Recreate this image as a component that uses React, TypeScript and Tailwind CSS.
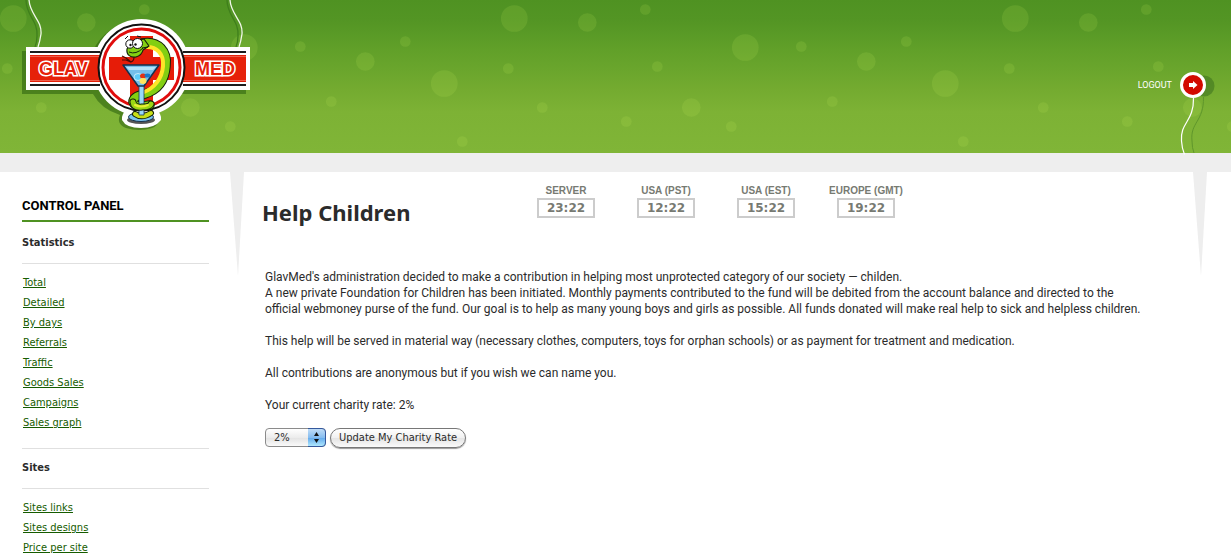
const BUBBLES = [
  [300, 46, 5], [365, 61, 9], [405, 41, 5], [331, 101, 5], [444, 83, 13], [462, 141, 5],
  [13, 18, 13], [7, 68, 5], [41, 107, 5], [86, 22, 9], [144, 9, 5], [125, 121, 5],
  [156, 66, 5], [190, 107, 9], [230, 126, 5], [244, 47, 13],
];

const CLOCKS = [
  { zone: "SERVER", time: "23:22" },
  { zone: "USA (PST)", time: "12:22" },
  { zone: "USA (EST)", time: "15:22" },
  { zone: "EUROPE (GMT)", time: "19:22" },
];

const MENU = [
  {
    title: "Statistics",
    links: ["Total", "Detailed", "By days", "Referrals", "Traffic", "Goods Sales", "Campaigns", "Sales graph"],
  },
  { title: "Sites", links: ["Sites links", "Sites designs", "Price per site"] },
];

function Bubbles() {
  return (
    <svg className="absolute inset-0 h-full w-full" aria-hidden="true">
      <defs>
        <pattern id="bubbles" width="501" height="153" patternUnits="userSpaceOnUse">
          {BUBBLES.map(([x, y, r]) => (
            <circle key={`${x}-${y}`} cx={x + 0.3} cy={y + 0.5} r={r + 0.3} fill="#c8f060" fillOpacity="0.13" />
          ))}
        </pattern>
      </defs>
      <rect width="100%" height="100%" fill="url(#bubbles)" />
    </svg>
  );
}

function Logo() {
  return (
    <svg width="232" height="132" viewBox="20 0 232 132" role="img" aria-label="GlavMed">
      {/* strings */}
      <g fill="none">
        <path d="M26 0C26 16 38 20 37 36Q37 42 35 47M227 0C227 16 239 20 238 36Q238 42 236 47" stroke="#3f7f1c" strokeWidth="1.3" />
        <path d="M29 0C30 15 42 20 41 34Q40 41 38 47M230 0C231 15 243 20 242 34Q241 41 239 47" stroke="#f2f8ea" strokeWidth="1.3" />
      </g>
      {/* drop shadow */}
      <path
        d="M22 51H93A48.5 48.5 0 0 1 182 51H246V94H178Q170 107 158 113Q162 124 152 128Q139 132 126 128Q116 124 120 115Q101 109 93 94H22Z"
        fill="#2f6410"
        fillOpacity="0.6"
      />
      {/* white plate */}
      <g fill="#fff">
        <path d="M26 47H250V90H26Z" />
        <circle cx="141.5" cy="67.5" r="48.5" />
        <path d="M128 108H155Q162 114 161 120Q155 128 141 128Q126 128 122 120Q121 114 128 108Z" />
      </g>
      {/* ribbon */}
      <path d="M30 52H100M183 52H246M30 85H100M183 85H246" stroke="#1c1c1c" strokeWidth="2" />
      <path d="M30 55H101V82H30ZM182 55H246V82H182Z" fill="#e62109" />
      <path d="M30 56.5H101M182 56.5H246M30 80.5H101M182 80.5H246" stroke="#f58b7c" strokeWidth="0.6" />
      <g
        fill="#e62109"
        stroke="#fff"
        strokeWidth="3"
        paintOrder="stroke"
        strokeLinejoin="miter"
        fontFamily="'Liberation Sans', Arial, sans-serif"
        fontWeight="900"
        fontSize="18"
      >
        <text x="39" y="75">GLAV</text>
        <text x="195" y="75">MED</text>
      </g>
      {/* medallion */}
      <circle cx="141.5" cy="67.5" r="43" fill="#fff" stroke="#111" strokeWidth="2" />
      <circle cx="141.5" cy="67.5" r="38.5" fill="#fff" stroke="#e00d0d" strokeWidth="3" />
      <path d="M130 36H153V57H174V80H153V101H130V80H109V57H130Z" fill="#e61c08" />
      {/* glass base */}
      <ellipse cx="141" cy="120" rx="14" ry="4" fill="#555" />
      <ellipse cx="141" cy="117" rx="12.5" ry="4.5" fill="#7cc5f0" stroke="#15304a" />
      {/* snake body */}
      <g fill="none" strokeLinecap="round">
        <path d="M142 43C159 40 168 52 166 66C165 80 158 90 145 94Q133 96 133 102Q135 108 150 105" stroke="#14220a" strokeWidth="9.5" />
        <path d="M142 43C159 40 168 52 166 66C165 80 158 90 145 94Q133 96 133 102Q135 108 150 105" stroke="#83cf12" strokeWidth="7.5" />
        <path d="M145 47C157 46 164 54 163 66C162 79 154 88 144 92" stroke="#ffe528" strokeWidth="4" />
        <path d="M135 114Q142 119 151 113" stroke="#14220a" strokeWidth="6" />
        <path d="M135 114Q142 119 151 113" stroke="#c8df18" strokeWidth="4" />
      </g>
      {/* glass */}
      <path d="M139 84H144V115H139Z" fill="#98d8fa" stroke="#173a5c" strokeWidth="0.8" />
      <path d="M123 65H159L144 86H138Z" fill="#74bfea" stroke="#12314e" strokeWidth="1.5" strokeLinejoin="round" />
      <path d="M126 67H156L153 70H129Z" fill="#b5e4fb" />
      <ellipse cx="138" cy="77" rx="4" ry="3.5" fill="#5ecbf8" stroke="#fff" strokeWidth="0.6" />
      <ellipse cx="143" cy="76" rx="3" ry="2.5" fill="#e33210" />
      <ellipse cx="147.5" cy="75.5" rx="3" ry="2" fill="#1779c9" />
      <ellipse cx="143" cy="81" rx="3.5" ry="3" fill="#ffe45c" />
      {/* coil crossing the stem */}
      <g fill="none" strokeLinecap="round">
        <path d="M133 102Q134 108 142 107Q150 107 151 104" stroke="#14220a" strokeWidth="7" />
        <path d="M133 102Q134 108 142 107Q150 107 151 104" stroke="#9bd714" strokeWidth="5" />
        <path d="M135 105Q141 108 148 105" stroke="#e9ee35" strokeWidth="2" />
      </g>
      {/* head */}
      <path d="M127 49C126 55 131 58 136 57Q142 55 143 50L149 46L144 39L131 42Z" fill="#83cf12" stroke="#14220a" strokeWidth="1.2" strokeLinejoin="round" />
      <path d="M129 52Q136 55 143 48M142 48L148 47" fill="none" stroke="#14220a" />
      <circle cx="130" cy="44" r="4.2" fill="#fff" stroke="#111" />
      <circle cx="137.5" cy="43.5" r="5" fill="#fff" stroke="#111" />
      <circle cx="130.5" cy="45" r="1.2" fill="#111" />
      <circle cx="135.5" cy="44.5" r="1.2" fill="#111" />
      <path d="M125 39L128 36M137 36L141 37" stroke="#111" fill="none" />
      <path d="M134 57Q134 61 131 62L126 60L122 60M131 62L126 58L122 56" fill="none" stroke="#4a0a06" strokeWidth="1.2" />
    </svg>
  );
}

function Spike() {
  return (
    <svg className="shrink-0" width="14" height="104" viewBox="0 0 14 104" aria-hidden="true">
      <path d="M0 0H14L8 104Z" fill="#eee" />
    </svg>
  );
}

function Header() {
  return (
    <header className="relative flex h-[153px] justify-between bg-[linear-gradient(#4f9222_0,#539524_20px,#61a029_50px,#74ab30_90px,#7db235_112px,#80b537_153px)] pl-5">
      <Bubbles />
      <a href="#home" className="relative">
        <Logo />
      </a>
      <a href="#logout" className="relative mr-4 flex pt-[71px] font-['Roboto'] text-[9px] leading-7 text-white">
        LOGOUT
        <svg className="ml-[7px]" width="36" height="84" viewBox="1179 71 36 84" aria-hidden="true">
          <circle cx="1204" cy="86" r="10.5" fill="#3f7420" fillOpacity="0.6" />
          <path d="M1203.5 97C1204 122 1190 122 1192 141Q1192 148 1194 153" fill="none" stroke="#5f962b" />
          <path d="M1193.5 98C1194 122 1180 122 1181.5 141Q1182 149 1184.5 154.5" fill="none" stroke="#fff" strokeWidth="1.2" />
          <circle cx="1193" cy="85" r="11.5" fill="#d20a00" stroke="#fff" strokeWidth="3" />
          <path d="M1189 83H1193V81L1197.5 85L1193 89V87H1189Z" fill="#fff" />
        </svg>
      </a>
    </header>
  );
}

function Sidebar() {
  return (
    <nav className="w-[230px] shrink-0 pr-[21px] pl-[22px]">
      <h2 className="mt-6 mb-0.5 border-b-2 border-[#4f9222] pb-1 font-['Roboto'] text-[13px] leading-5 font-bold text-black">
        CONTROL PANEL
      </h2>
      {MENU.map((group, i) => (
        <section key={group.title} className={i > 0 ? "mt-[15px] border-t border-[#e0e0e0]" : ""}>
          <h3 className="border-b border-[#e0e0e0] pt-[9px] pb-2.5 text-[11px] leading-5 font-bold">{group.title}</h3>
          <ul className="mt-[9px] pl-px text-[11px] leading-5">
            {group.links.map((link) => (
              <li key={link}>
                <a href="#menu" className="text-[#165c00] underline">
                  {link}
                </a>
              </li>
            ))}
          </ul>
        </section>
      ))}
    </nav>
  );
}

function Clocks() {
  return (
    <dl className="flex text-center font-bold text-[#777a72]">
      {CLOCKS.map((clock) => (
        <div key={clock.zone} className="w-[100px]">
          <dt className="pt-0.5 font-['Liberation_Sans'] text-[10px] leading-[14px] whitespace-nowrap">{clock.zone}</dt>
          <dd className="mx-auto w-[58px] border-2 border-[#ccc] font-['DejaVu_Sans'] text-xs leading-4">
            {clock.time}
          </dd>
        </div>
      ))}
    </dl>
  );
}

function CharityForm() {
  return (
    <form className="mt-[15px] flex items-start gap-1 pl-[3px]" onSubmit={(e) => e.preventDefault()}>
      <div className="relative">
        <select
          aria-label="Charity rate"
          defaultValue="2%"
          className="block h-[19px] w-[61px] appearance-none rounded border border-[#8b8b8b] bg-[linear-gradient(#fff,#ececec_50%,#e2e2e2_50%,#fafafa)] pl-2 text-[11px] leading-4"
        >
          <option>2%</option>
          <option>5%</option>
          <option>10%</option>
        </select>
        <svg className="pointer-events-none absolute top-0 right-0" width="18" height="19" viewBox="0 0 18 19" aria-hidden="true">
          <defs>
            <linearGradient id="aqua" x2="0" y2="1">
              <stop offset="0" stopColor="#c3def7" />
              <stop offset="0.5" stopColor="#86bdf0" />
              <stop offset="0.52" stopColor="#62a9ec" />
              <stop offset="1" stopColor="#b4ecff" />
            </linearGradient>
          </defs>
          <path d="M0 0.5H14Q17.5 0.5 17.5 4V15Q17.5 18.5 14 18.5H0Z" fill="url(#aqua)" />
          <path d="M0 0.5H14Q17.5 0.5 17.5 4V15Q17.5 18.5 14 18.5H0" fill="none" stroke="#35589c" />
          <path d="M6 8L8.5 4L11 8ZM6 11L8.5 15L11 11Z" fill="#111" />
        </svg>
      </div>
      <button
        type="submit"
        className="h-5 rounded-full border border-[#777] bg-[linear-gradient(#fff,#f0f0f0_50%,#e4e4e4_50%,#fafafa)] px-2 text-[11px] leading-4 shadow-[0_1px_1px_#999]"
      >
        Update My Charity Rate
      </button>
    </form>
  );
}

function HelpChildren() {
  return (
    <main className="min-w-0 flex-1 pl-[18px]">
      <div className="flex">
        <h1 className="mt-6 w-[254px] font-['Noto_Sans'] text-[22px] leading-8 font-bold">Help Children</h1>
        <div className="mt-[10px]">
          <Clocks />
        </div>
      </div>
      <div className="mt-[41px] space-y-4 pl-[3px] font-['Roboto'] text-xs leading-4">
        <p>
          GlavMed's administration decided to make a contribution in helping most unprotected category of our society —
          childen.
          <br />
          A new private Foundation for Children has been initiated. Monthly payments contributed to the fund will be
          debited from the account balance and directed to the
          <br />
          official webmoney purse of the fund. Our goal is to help as many young boys and girls as possible. All funds
          donated will make real help to sick and helpless children.
        </p>
        <p>
          This help will be served in material way (necessary clothes, computers, toys for orphan schools) or as payment
          for treatment and medication.
        </p>
        <p>All contributions are anonymous but if you wish we can name you.</p>
        <p>Your current charity rate: 2%</p>
      </div>
      <CharityForm />
    </main>
  );
}

export default function App() {
  return (
    <div className="bg-white font-['DejaVu_Sans_Condensed',Tahoma,sans-serif] text-[#2b2b2b]">
      <Header />
      <div className="h-[19px] bg-[#eee]" />
      <div className="flex">
        <Sidebar />
        <Spike />
        <HelpChildren />
        <div className="w-[38px] shrink-0">
          <Spike />
        </div>
      </div>
    </div>
  );
}
